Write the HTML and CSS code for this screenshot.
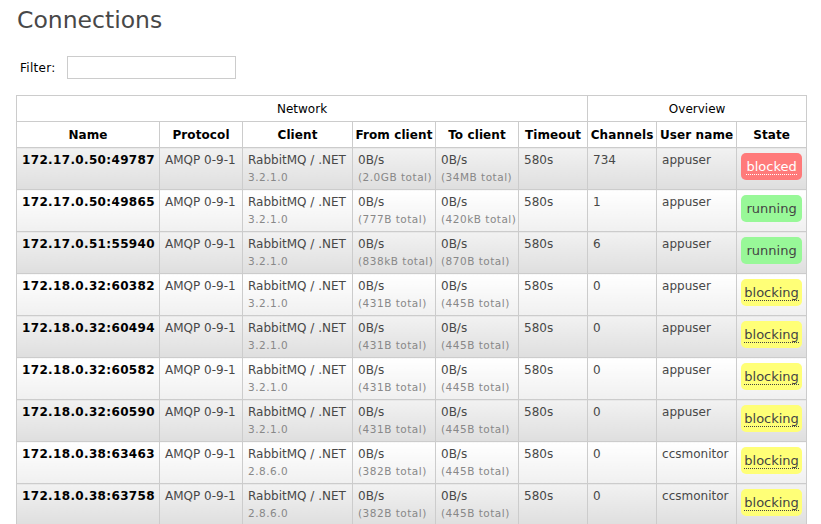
FILE: index.html
```html
<!DOCTYPE html>
<html>
<head>
<meta charset="utf-8">
<link rel="stylesheet" href="styles.css">
</head>
<body>
<div class="page">
  <h1 class="title">Connections</h1>
  <div class="filter">
    <label class="filter-label">Filter:</label>
    <input class="filter-input" type="text">
  </div>
  <table class="list">
    <colgroup>
      <col class="c-name"><col class="c-proto"><col class="c-client"><col class="c-from"><col class="c-to"><col class="c-timeout"><col class="c-chan"><col class="c-user"><col class="c-state">
    </colgroup>
    <thead>
      <tr class="group-row">
        <th colspan="6" class="group">Network</th>
        <th colspan="3" class="group">Overview</th>
      </tr>
      <tr class="head-row">
        <th>Name</th><th>Protocol</th><th>Client</th><th>From client</th><th>To client</th><th>Timeout</th><th>Channels</th><th>User name</th><th>State</th>
      </tr>
    </thead>
    <tbody>
      <tr class="alt1">
        <td class="name">172.17.0.50:49787</td><td>AMQP 0-9-1</td><td>RabbitMQ / .NET<sub>3.2.1.0</sub></td><td>0B/s<sub>(2.0GB total)</sub></td><td>0B/s<sub>(34MB total)</sub></td><td>580s</td><td>734</td><td>appuser</td><td class="state"><span class="badge red"><abbr>blocked</abbr></span></td>
      </tr>
      <tr class="alt2">
        <td class="name">172.17.0.50:49865</td><td>AMQP 0-9-1</td><td>RabbitMQ / .NET<sub>3.2.1.0</sub></td><td>0B/s<sub>(777B total)</sub></td><td>0B/s<sub>(420kB total)</sub></td><td>580s</td><td>1</td><td>appuser</td><td class="state"><span class="badge green">running</span></td>
      </tr>
      <tr class="alt1">
        <td class="name">172.17.0.51:55940</td><td>AMQP 0-9-1</td><td>RabbitMQ / .NET<sub>3.2.1.0</sub></td><td>0B/s<sub>(838kB total)</sub></td><td>0B/s<sub>(870B total)</sub></td><td>580s</td><td>6</td><td>appuser</td><td class="state"><span class="badge green">running</span></td>
      </tr>
      <tr class="alt2">
        <td class="name">172.18.0.32:60382</td><td>AMQP 0-9-1</td><td>RabbitMQ / .NET<sub>3.2.1.0</sub></td><td>0B/s<sub>(431B total)</sub></td><td>0B/s<sub>(445B total)</sub></td><td>580s</td><td>0</td><td>appuser</td><td class="state"><span class="badge yellow"><abbr>blocking</abbr></span></td>
      </tr>
      <tr class="alt1">
        <td class="name">172.18.0.32:60494</td><td>AMQP 0-9-1</td><td>RabbitMQ / .NET<sub>3.2.1.0</sub></td><td>0B/s<sub>(431B total)</sub></td><td>0B/s<sub>(445B total)</sub></td><td>580s</td><td>0</td><td>appuser</td><td class="state"><span class="badge yellow"><abbr>blocking</abbr></span></td>
      </tr>
      <tr class="alt2">
        <td class="name">172.18.0.32:60582</td><td>AMQP 0-9-1</td><td>RabbitMQ / .NET<sub>3.2.1.0</sub></td><td>0B/s<sub>(431B total)</sub></td><td>0B/s<sub>(445B total)</sub></td><td>580s</td><td>0</td><td>appuser</td><td class="state"><span class="badge yellow"><abbr>blocking</abbr></span></td>
      </tr>
      <tr class="alt1">
        <td class="name">172.18.0.32:60590</td><td>AMQP 0-9-1</td><td>RabbitMQ / .NET<sub>3.2.1.0</sub></td><td>0B/s<sub>(431B total)</sub></td><td>0B/s<sub>(445B total)</sub></td><td>580s</td><td>0</td><td>appuser</td><td class="state"><span class="badge yellow"><abbr>blocking</abbr></span></td>
      </tr>
      <tr class="alt2">
        <td class="name">172.18.0.38:63463</td><td>AMQP 0-9-1</td><td>RabbitMQ / .NET<sub>2.8.6.0</sub></td><td>0B/s<sub>(382B total)</sub></td><td>0B/s<sub>(445B total)</sub></td><td>580s</td><td>0</td><td>ccsmonitor</td><td class="state"><span class="badge yellow"><abbr>blocking</abbr></span></td>
      </tr>
      <tr class="alt1">
        <td class="name">172.18.0.38:63758</td><td>AMQP 0-9-1</td><td>RabbitMQ / .NET<sub>2.8.6.0</sub></td><td>0B/s<sub>(382B total)</sub></td><td>0B/s<sub>(445B total)</sub></td><td>580s</td><td>0</td><td>ccsmonitor</td><td class="state"><span class="badge yellow"><abbr>blocking</abbr></span></td>
      </tr>
    </tbody>
  </table>
</div>
</body>
</html>
```
FILE: styles.css
```css
html, body {
  margin: 0;
  padding: 0;
  background: #fff;
}
body {
  font-family: "DejaVu Sans", Verdana, sans-serif;
  font-size: 12px;
  color: #484848;
}
.page {
  padding: 0 0 0 16px;
}
.title {
  margin: 0;
  padding: 6px 0 0 1px;
  height: 34px;
  font-size: 23.5px;
  font-weight: normal;
  line-height: 28px;
  color: #484848;
}
.filter {
  display: flex;
  align-items: center;
  gap: 11px;
  padding: 0 0 0 4px;
  margin: 16px 0 16px 0;
  height: 23px;
}
.filter-label {
  font-size: 12px;
  color: #000;
  letter-spacing: 0.3px;
}
.filter-input {
  box-sizing: border-box;
  width: 169px;
  height: 23px;
  margin: 0;
  border: 1px solid #ccc;
  padding: 2px;
  font: inherit;
}
.list {
  border-collapse: collapse;
  table-layout: fixed;
  width: 790px;
  margin-top: 0;
}
.c-name { width: 143px; }
.c-proto { width: 83px; }
.c-client { width: 110px; }
.c-from { width: 83px; }
.c-to { width: 83px; }
.c-timeout { width: 69px; }
.c-chan { width: 69px; }
.c-user { width: 80px; }
.c-state { width: 70px; }
.list th, .list td {
  border: 1px solid #ccc;
}
.list th {
  background: #fff;
  color: #000;
  height: 25px;
  padding: 0 2px;
  text-align: center;
  white-space: nowrap;
}
.group-row th {
  font-weight: normal;
  color: #000;
}
.head-row th {
  font-weight: bold;
  letter-spacing: 0.1px;
}
.list td {
  vertical-align: top;
  padding: 4px 5px 0 5px;
  height: 37px;
  white-space: nowrap;
  line-height: 16px;
  color: #484848;
  overflow: hidden;
}
.list td.name {
  font-weight: bold;
  color: #000;
  letter-spacing: 0.35px;
}
.list sub {
  display: block;
  vertical-align: baseline;
  font-size: 10.5px;
  line-height: 16px;
  margin-top: 1px;
  color: #888;
  letter-spacing: 0.5px;
}
tr.alt1 td {
  background: linear-gradient(to bottom, #f2f2f2, #dedede);
}
tr.alt2 td {
  background: linear-gradient(to bottom, #ffffff, #f0f0f0);
}
.list td.state {
  text-align: center;
  padding: 4px 4px 0 4px;
}
.badge {
  display: block;
  height: 27px;
  line-height: 27px;
  border-radius: 5px;
  font-size: 13px;
  text-align: center;
  margin-top: 1px;
}
.badge abbr {
  text-decoration: none;
  border-bottom: 1px dotted currentColor;
}
.badge.red {
  background: #ff7a7a;
  color: #fff;
}
.badge.green {
  background: #98f898;
  color: #444;
}
.badge.yellow {
  background: #ffff77;
  color: #444;
}
```
